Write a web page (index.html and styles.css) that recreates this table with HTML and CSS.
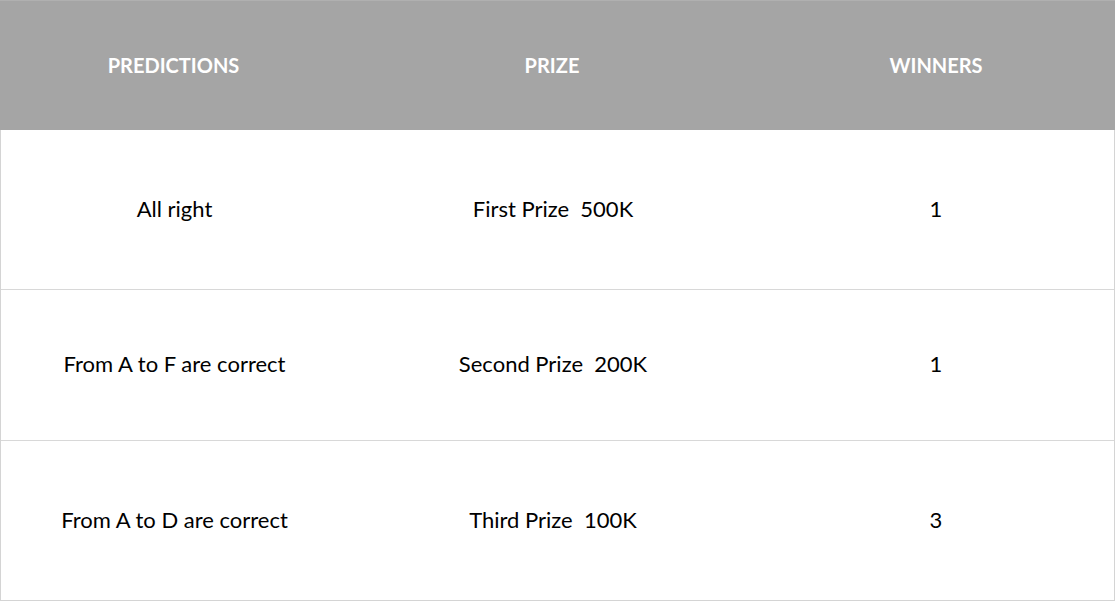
FILE: index.html
```html
<!DOCTYPE html>
<html>
<head>
<meta charset="utf-8">
<link rel="stylesheet" href="styles.css">
</head>
<body>
<div class="table">
  <div class="row head">
    <div class="cell c1">PREDICTIONS</div>
    <div class="cell c2">PRIZE</div>
    <div class="cell c3">WINNERS</div>
  </div>
  <div class="row r1">
    <div class="cell c1">All right</div>
    <div class="cell c2">First Prize&nbsp; 500K</div>
    <div class="cell c3">1</div>
  </div>
  <div class="row r2">
    <div class="cell c1">From A to F are correct</div>
    <div class="cell c2">Second Prize&nbsp; 200K</div>
    <div class="cell c3">1</div>
  </div>
  <div class="row r3">
    <div class="cell c1">From A to D are correct</div>
    <div class="cell c2">Third Prize&nbsp; 100K</div>
    <div class="cell c3">3</div>
  </div>
</div>
</body>
</html>
```
FILE: styles.css
```css
html, body {
  margin: 0;
  padding: 0;
  background: #ffffff;
}
.table {
  width: 1115px;
  box-sizing: border-box;
  border-left: 1px solid #d4d4d4;
  border-right: 1px solid #d4d4d4;
  border-bottom: 1px solid #d4d4d4;
  font-family: Lato, "Open Sans", sans-serif;
  font-size: 22px;
  color: #000000;
}
.row {
  display: grid;
  grid-template-columns: 347px 410px 1fr;
  align-items: center;
  text-align: center;
}
.cell {
  white-space: nowrap;
  line-height: 24px;
}
.head {
  height: 130px;
  background: #a5a5a5;
  color: #ffffff;
  font-size: 20px;
  font-weight: 700;
  margin-left: -1px;
  margin-right: -1px;
  border-top: 1px solid #b0b0b0;
  box-sizing: border-box;
}
.head .cell {
  padding-bottom: 1px;
}
.r1 {
  height: 160px;
  border-bottom: 1px solid #d8d8d8;
  box-sizing: border-box;
}
.r1 .cell, .r2 .cell, .r3 .cell {
  padding-bottom: 2px;
}
.r2 {
  height: 151px;
  border-bottom: 1px solid #d8d8d8;
  box-sizing: border-box;
}
.r3 {
  height: 159px;
}
```
